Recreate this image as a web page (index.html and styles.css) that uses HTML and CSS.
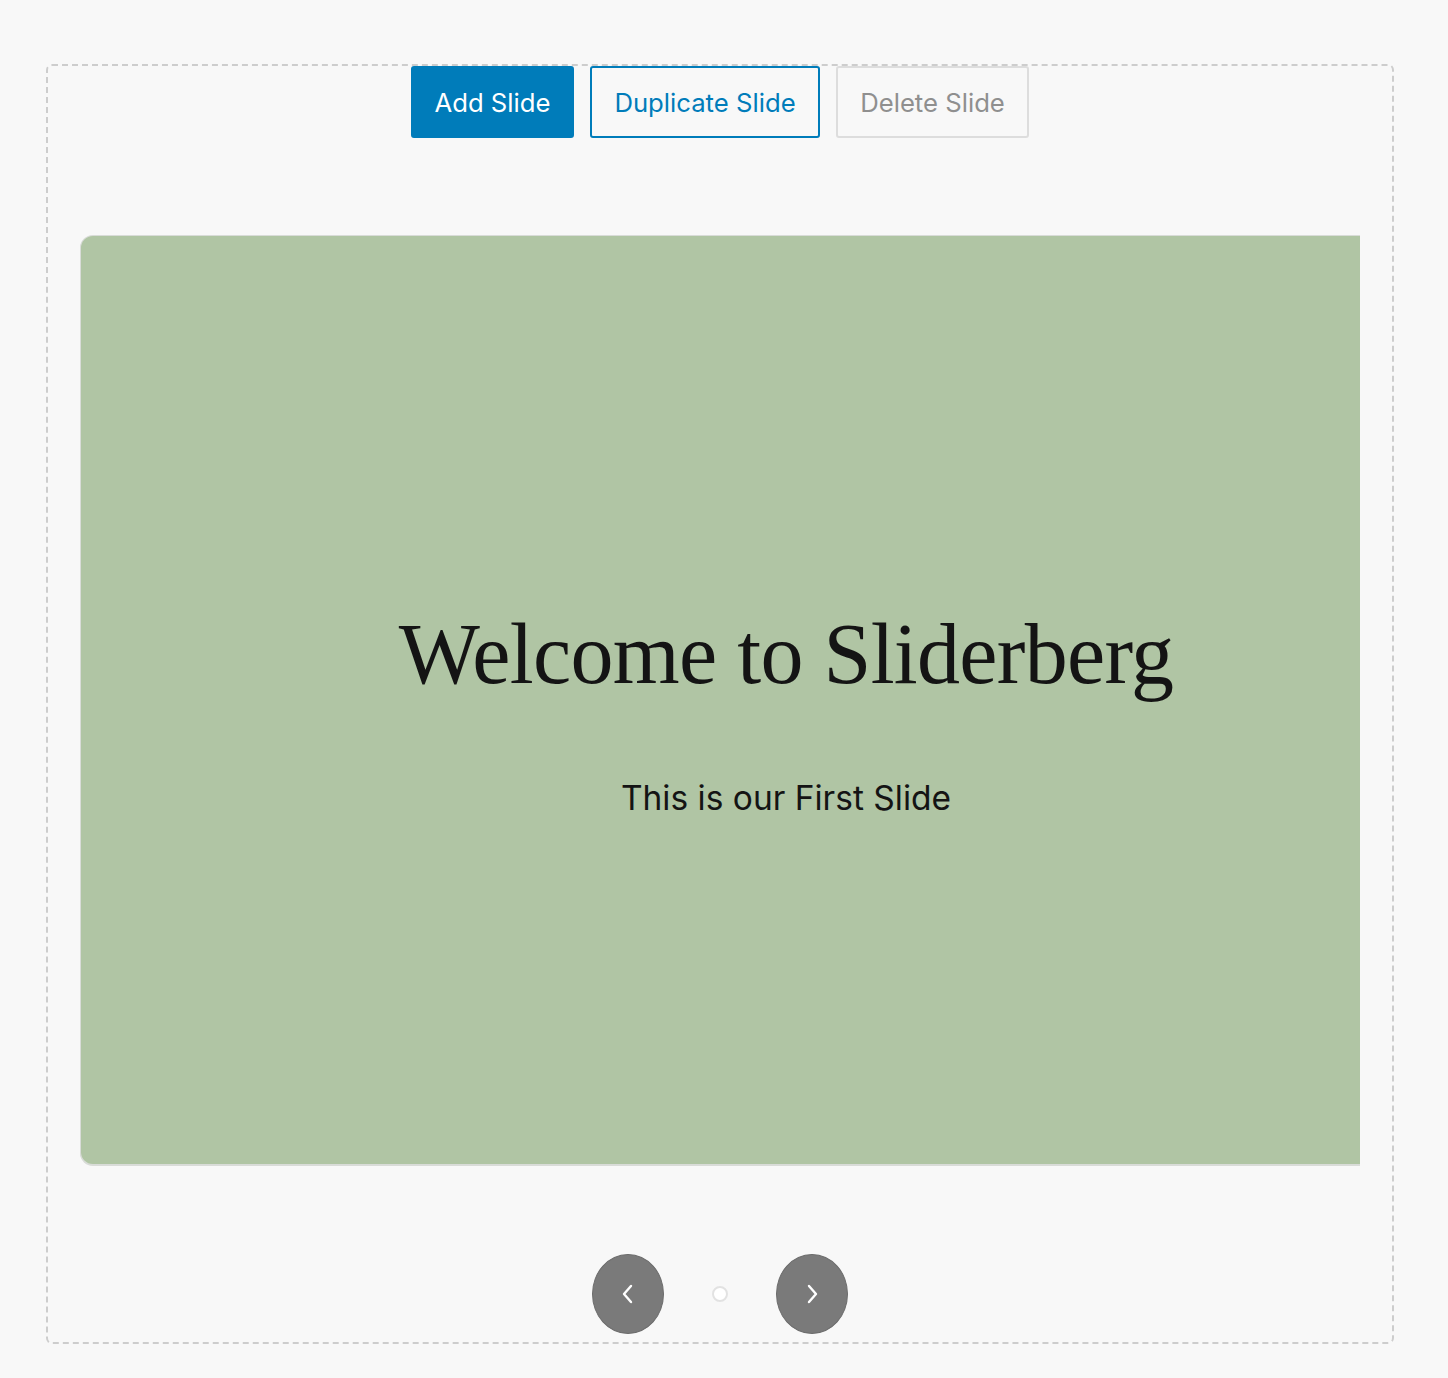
FILE: index.html
```html
<!DOCTYPE html>
<html lang="en">
<head>
<meta charset="utf-8">
<title>Sliderberg</title>
<link rel="stylesheet" href="styles.css">
</head>
<body>
<div class="editor">
  <div class="toolbar">
    <button class="btn btn-primary">Add Slide</button>
    <button class="btn btn-secondary">Duplicate Slide</button>
    <button class="btn btn-disabled">Delete Slide</button>
  </div>
  <div class="viewport">
    <div class="slide">
      <h1 class="slide-title">Welcome to Sliderberg</h1>
      <p class="slide-text">This is our First Slide</p>
    </div>
  </div>
  <div class="nav">
    <button class="nav-btn" aria-label="Previous">
      <svg width="14" height="22" viewBox="0 0 14 22"><path d="M10 3 L3 11 L10 19" fill="none" stroke="#fff" stroke-width="2.4" stroke-linecap="round" stroke-linejoin="round"/></svg>
    </button>
    <span class="dot"></span>
    <button class="nav-btn" aria-label="Next">
      <svg width="14" height="22" viewBox="0 0 14 22"><path d="M4 3 L11 11 L4 19" fill="none" stroke="#fff" stroke-width="2.4" stroke-linecap="round" stroke-linejoin="round"/></svg>
    </button>
  </div>
</div>
</body>
</html>
```

FILE: styles.css
```css
html, body {
  margin: 0;
  padding: 0;
  background: #f8f8f8;
}
body {
  font-family: Inter, "Noto Sans", sans-serif;
  padding: 64px 0 0 46px;
}
.editor {
  box-sizing: border-box;
  width: 1348px;
  height: 1280px;
  border: 2px dashed #cdcdcd;
  border-radius: 6px;
  display: flex;
  flex-direction: column;
  align-items: stretch;
}
.toolbar {
  display: flex;
  justify-content: center;
  gap: 16px;
  margin-top: 0;
}
.btn {
  box-sizing: border-box;
  height: 72px;
  padding: 0;
  font-family: Inter, "Noto Sans", sans-serif;
  font-size: 25.7px;
  border-radius: 3px;
  border: 2px solid transparent;
  background: transparent;
  cursor: pointer;
}
.btn-primary {
  background: #007cba;
  border-color: #007cba;
  color: #fff;
  width: 163px;
}
.btn-secondary {
  border-color: #007cba;
  color: #007cba;
  width: 230px;
}
.btn-disabled {
  border-color: #dddddd;
  color: #8f8f8f;
  width: 193px;
}
.viewport {
  margin: 97px 32px 0 32px;
  height: 931px;
  overflow: hidden;
  padding: 1px 0 2px 1px;
  box-sizing: border-box;
}
.slide {
  box-sizing: border-box;
  width: 1410px;
  height: 928px;
  background: #b0c5a4;
  border-radius: 12px;
  box-shadow: 0 0 0 1px #d9dcd8, 0 1px 0 1px #d9dcd8;
  display: flex;
  flex-direction: column;
  align-items: center;
  justify-content: center;
  padding-top: 26px;
}
.slide-title {
  margin: 0;
  font-family: "Liberation Serif", "DejaVu Serif", serif;
  font-weight: 400;
  font-size: 86px;
  letter-spacing: -0.7px;
  line-height: 1;
  color: #141414;
}
.slide-text {
  margin: 85px 0 0;
  font-family: Inter, "Noto Sans", sans-serif;
  font-size: 33.5px;
  line-height: 1;
  color: #141414;
}
.nav {
  display: flex;
  justify-content: center;
  align-items: center;
  gap: 48px;
  margin-top: 88px;
}
.nav-btn {
  width: 72px;
  height: 80px;
  border-radius: 50%;
  background: #7a7a7a;
  border: 1px solid #6c6c6c;
  display: flex;
  align-items: center;
  justify-content: center;
  padding: 0;
  cursor: pointer;
}
.dot {
  box-sizing: border-box;
  width: 16px;
  height: 16px;
  border-radius: 50%;
  background: #fff;
  border: 2px solid #e2e2e2;
}
```
